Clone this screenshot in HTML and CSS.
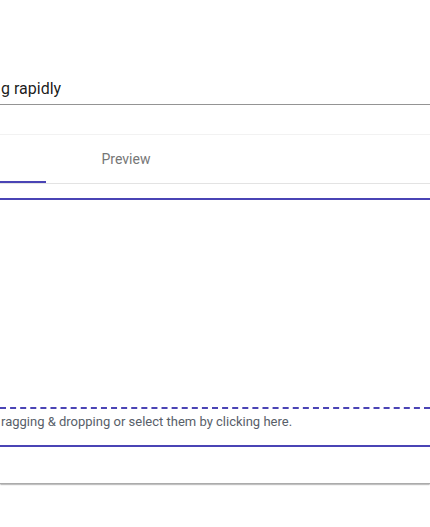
FILE: index.html
```html
<!DOCTYPE html>
<html>
<head>
<meta charset="utf-8">
<link rel="stylesheet" href="styles.css">
</head>
<body>
<div class="page">
  <div class="title-field">
    <div class="title-input">g rapidly</div>
  </div>
  <div class="tabs">
    <div class="tab tab-active"><span class="indicator"></span></div>
    <div class="tab"><span class="tab-label">Preview</span></div>
  </div>
  <div class="editor">
    <div class="editor-text"></div>
    <div class="drop-tip">ragging &amp; dropping or select them by clicking here.</div>
  </div>
  <div class="card-bottom"></div>
</div>
</body>
</html>
```
FILE: styles.css
```css
html, body {
  margin: 0;
  padding: 0;
  background: #ffffff;
  overflow: hidden;
}
.page {
  width: 430px;
  height: 527px;
  overflow: hidden;
  font-family: Roboto, "Liberation Sans", sans-serif;
}
.title-field {
  padding-top: 72px;
}
.title-input {
  font-size: 16px;
  line-height: 19px;
  padding: 7px 0 6px 1px;
  color: rgba(0, 0, 0, 0.9);
  border-bottom: 1px solid #949494;
}
.tabs {
  margin-top: 29px;
  border-top: 1px solid #f2f2f2;
  border-bottom: 1px solid #e3e3e3;
  display: flex;
  height: 48px;
}
.tab {
  position: relative;
  flex: 0 0 160px;
  display: flex;
  align-items: center;
  justify-content: center;
  font-size: 14px;
  color: #767676;
}
.tab-active {
  margin-left: -114px;
}
.indicator {
  position: absolute;
  left: 0;
  right: 0;
  bottom: 0;
  height: 2px;
  background: #4a44b5;
}
.editor {
  margin-top: 14px;
  border-top: 2px solid #4a44b5;
  border-bottom: 2px solid #4a44b5;
}
.editor-text {
  height: 207px;
  border-bottom: 2px dashed #4a44b5;
}
.drop-tip {
  height: 36px;
  box-sizing: border-box;
  padding: 5px 0 0 1px;
  font-size: 13px;
  line-height: 16px;
  color: #586069;
}
.card-bottom {
  height: 36px;
  border-bottom: 1px solid #ababab;
  box-shadow: 0 1px 1px rgba(0, 0, 0, 0.14), 0 2px 1px -1px rgba(0, 0, 0, 0.12);
}
```
